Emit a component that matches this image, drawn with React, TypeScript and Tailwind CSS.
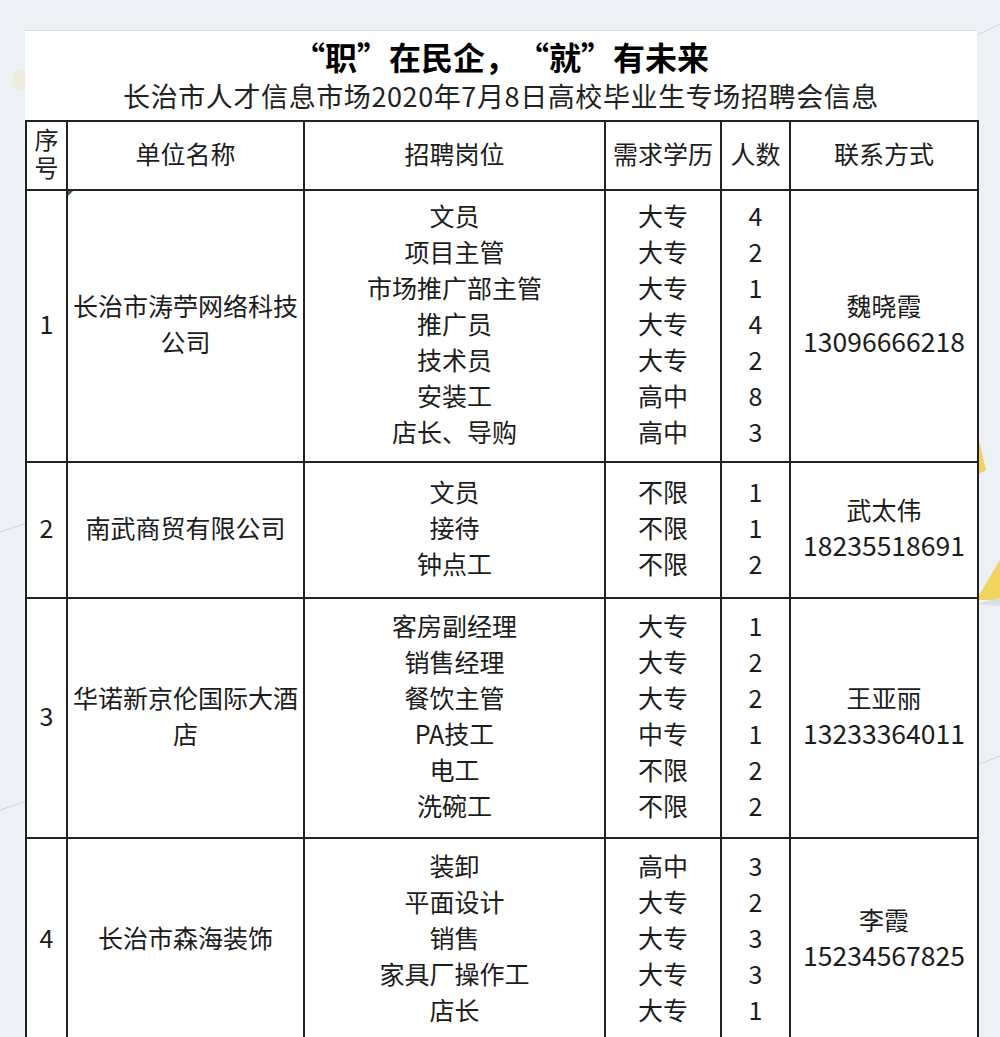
import React from "react";

type Job = { title: string; edu: string; count: number };

type Unit = {
  no: number;
  name: string[];
  jobs: Job[];
  contact: string;
  phone: string;
  height: number;
};

const units: Unit[] = [
  {
    no: 1,
    name: ["长治市涛苧网络科技", "公司"],
    jobs: [
      { title: "文员", edu: "大专", count: 4 },
      { title: "项目主管", edu: "大专", count: 2 },
      { title: "市场推广部主管", edu: "大专", count: 1 },
      { title: "推广员", edu: "大专", count: 4 },
      { title: "技术员", edu: "大专", count: 2 },
      { title: "安装工", edu: "高中", count: 8 },
      { title: "店长、导购", edu: "高中", count: 3 },
    ],
    contact: "魏晓霞",
    phone: "13096666218",
    height: 272,
  },
  {
    no: 2,
    name: ["南武商贸有限公司"],
    jobs: [
      { title: "文员", edu: "不限", count: 1 },
      { title: "接待", edu: "不限", count: 1 },
      { title: "钟点工", edu: "不限", count: 2 },
    ],
    contact: "武太伟",
    phone: "18235518691",
    height: 136,
  },
  {
    no: 3,
    name: ["华诺新京伦国际大酒", "店"],
    jobs: [
      { title: "客房副经理", edu: "大专", count: 1 },
      { title: "销售经理", edu: "大专", count: 2 },
      { title: "餐饮主管", edu: "大专", count: 2 },
      { title: "PA技工", edu: "中专", count: 1 },
      { title: "电工", edu: "不限", count: 2 },
      { title: "洗碗工", edu: "不限", count: 2 },
    ],
    contact: "王亚丽",
    phone: "13233364011",
    height: 240,
  },
  {
    no: 4,
    name: ["长治市森海装饰"],
    jobs: [
      { title: "装卸", edu: "高中", count: 3 },
      { title: "平面设计", edu: "大专", count: 2 },
      { title: "销售", edu: "大专", count: 3 },
      { title: "家具厂操作工", edu: "大专", count: 3 },
      { title: "店长", edu: "大专", count: 1 },
    ],
    contact: "李霞",
    phone: "15234567825",
    height: 204,
  },
];

const cell = "border-2 border-[#222] px-0 pt-0 pb-[6px] text-center align-middle";

function Backdrop() {
  // faint background shapes behind the sheet
  return (
    <svg
      className="absolute inset-0 h-full w-full"
      viewBox="0 0 1000 1037"
      preserveAspectRatio="none"
    >
      <line x1="0" y1="532" x2="30" y2="522" stroke="#c9d6e2" strokeWidth="1" />
      <line x1="0" y1="810" x2="30" y2="800" stroke="#c9d6e2" strokeWidth="1" />
      <line x1="975" y1="36" x2="1000" y2="24" stroke="#cfd9e3" strokeWidth="1" />
      <line x1="975" y1="766" x2="1000" y2="756" stroke="#c9d6e2" strokeWidth="1" />
      <polygon points="976,428 986,470 976,476" fill="#f0c94a" opacity="0.85" />
      <polygon points="976,600 1000,560 1000,600" fill="#f1cf4f" opacity="0.9" />
      <polygon points="976,604 1000,598 1000,606" fill="#d9dfe6" />
      <ellipse cx="20" cy="80" rx="8" ry="10" fill="#f4e6b8" opacity="0.45" />
    </svg>
  );
}

// full-width quote marks, as in the source sheet
function Open() {
  return <span className="inline-block w-[32px] text-right">“</span>;
}
function Close() {
  return <span className="inline-block w-[32px] text-left">”</span>;
}

export default function App() {
  return (
    <div
      className="relative h-[1037px] w-full overflow-hidden bg-[#edf1f5] text-[#1c1c1c]"
      style={{ fontFamily: '"Noto Sans CJK SC", "Noto Sans", sans-serif' }}
    >
      <Backdrop />
      <div className="relative ml-[25px] mt-[30px] w-[952px] border-t border-[#d8dde3] bg-white">
        <header className="pt-[6px] pb-[6px] text-center">
          <h1 className="text-[32px] font-bold leading-[38px] text-black">
            <Open />职<Close />在民企，<Open />就<Close />有未来
          </h1>
          <p className="mt-[3px] text-[27px] leading-[36px] tracking-[0.6px] text-[#222]">
            长治市人才信息市场2020年7月8日高校毕业生专场招聘会信息
          </p>
        </header>

        <table className="w-[952px] table-fixed border-collapse text-[25px] leading-[36px]">
          <colgroup>
            <col className="w-[41px]" />
            <col className="w-[237px]" />
            <col className="w-[301px]" />
            <col className="w-[116px]" />
            <col className="w-[69px]" />
            <col className="w-[188px]" />
          </colgroup>
          <thead>
            <tr className="h-[69px]">
              <th className={`${cell} text-[24px] font-normal leading-[28px]`}>
                <div>序</div>
                <div>号</div>
              </th>
              <th className={`${cell} font-normal`}>单位名称</th>
              <th className={`${cell} font-normal`}>招聘岗位</th>
              <th className={`${cell} font-normal`}>需求学历</th>
              <th className={`${cell} font-normal`}>人数</th>
              <th className={`${cell} font-normal`}>联系方式</th>
            </tr>
          </thead>
          <tbody>
            {units.map((u) => (
              <tr key={u.no} style={{ height: u.height }}>
                <td className={cell}>{u.no}</td>
                <td className={`${cell} relative whitespace-nowrap`}>
                  {u.no === 1 && (
                    <span className="absolute left-0 top-0 h-0 w-0 border-r-[5px] border-t-[5px] border-r-transparent border-t-[#1f7a2e]" />
                  )}
                  {u.name.map((n) => (
                    <div key={n}>{n}</div>
                  ))}
                </td>
                <td className={`${cell} whitespace-nowrap`}>
                  {u.jobs.map((j, i) => (
                    <div key={i}>{j.title}</div>
                  ))}
                </td>
                <td className={cell}>
                  {u.jobs.map((j, i) => (
                    <div key={i}>{j.edu}</div>
                  ))}
                </td>
                <td className={cell}>
                  {u.jobs.map((j, i) => (
                    <div key={i}>{j.count}</div>
                  ))}
                </td>
                <td className={cell}>
                  <div>{u.contact}</div>
                  <div className="text-[26.5px]">{u.phone}</div>
                </td>
              </tr>
            ))}
          </tbody>
        </table>
      </div>
    </div>
  );
}
